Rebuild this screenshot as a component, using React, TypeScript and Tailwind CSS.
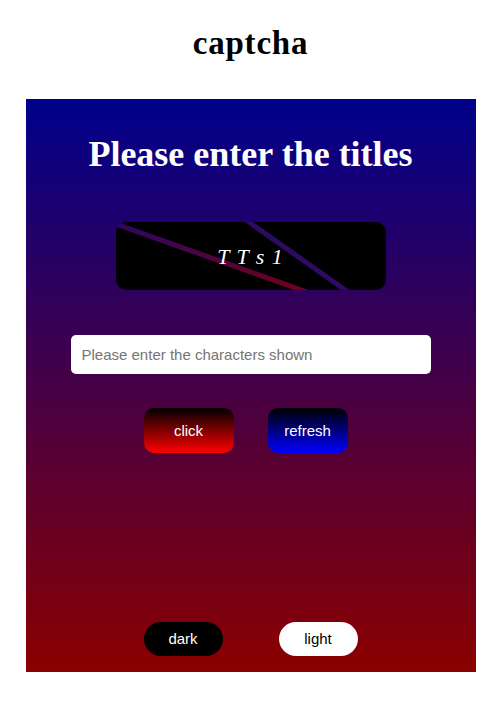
import React from 'react';

const serif = { fontFamily: '"Liberation Serif", "Times New Roman", serif' };

// Noise strokes drawn across the captcha box
function CaptchaImage({ text }: { text: string }) {
  return (
    <div className="relative mx-auto mt-[48px] flex h-[68px] w-[270px] items-center justify-center overflow-hidden rounded-[10px] bg-black">
      <svg className="absolute inset-0" width="270" height="68" viewBox="0 0 270 68">
        <defs>
          <linearGradient id="l1" x1="0" y1="0" x2="1" y2="1">
            <stop offset="0" stopColor="#2c0662" />
            <stop offset="1" stopColor="#74001a" />
          </linearGradient>
        </defs>
        <line x1="0" y1="2" x2="191" y2="70" stroke="url(#l1)" strokeWidth="5" />
        <line x1="130" y1="-2" x2="232" y2="70" stroke="#2f0a62" strokeWidth="5" />
      </svg>
      <span
        className="relative pt-[2px] text-[22px] italic leading-[26px] tracking-[1px] text-white whitespace-pre"
        style={serif}
      >
        {text}
      </span>
    </div>
  );
}

export default function App() {
  return (
    <div className="flex flex-col items-center bg-white pb-[33px]" style={{ fontFamily: '"Liberation Sans", Arial, sans-serif' }}>
      <h1 className="mt-[25px] text-[33px] font-bold leading-[36px] tracking-[0.8px] text-black" style={serif}>
        captcha
      </h1>

      <div className="mt-[38px] flex h-[573px] w-[450px] flex-col bg-[linear-gradient(to_bottom,#00008b,#8b0000)] pt-[35px] pb-[16px]">
        <h2 className="text-center text-[36px] font-bold leading-[40px] text-white" style={serif}>
          Please enter the titles
        </h2>

        <CaptchaImage text="T T s 1" />

        <input
          type="text"
          placeholder="Please enter the characters shown"
          className="mx-auto mt-[45px] block h-[39px] w-[360px] rounded-[5px] bg-white px-[11px] text-[15px] text-black outline-none placeholder:text-[#757575]"
        />

        <div className="mt-[34px] flex justify-center gap-[34px] pr-[10px]">
          <button className="h-[45px] w-[90px] rounded-[10px] bg-[linear-gradient(to_bottom,#000000,#ff0000)] pt-[1px] text-[15px] text-white">
            click
          </button>
          <button className="h-[45px] w-[80px] rounded-[10px] bg-[linear-gradient(to_bottom,#000000,#0000ff)] pt-[1px] text-[15px] text-white">
            refresh
          </button>
        </div>

        <div className="mt-auto flex justify-center gap-[56px]">
          <button className="h-[34px] w-[79px] rounded-full bg-black text-[15px] text-white">dark</button>
          <button className="h-[34px] w-[79px] rounded-full bg-white text-[15px] text-black">light</button>
        </div>
      </div>
    </div>
  );
}
